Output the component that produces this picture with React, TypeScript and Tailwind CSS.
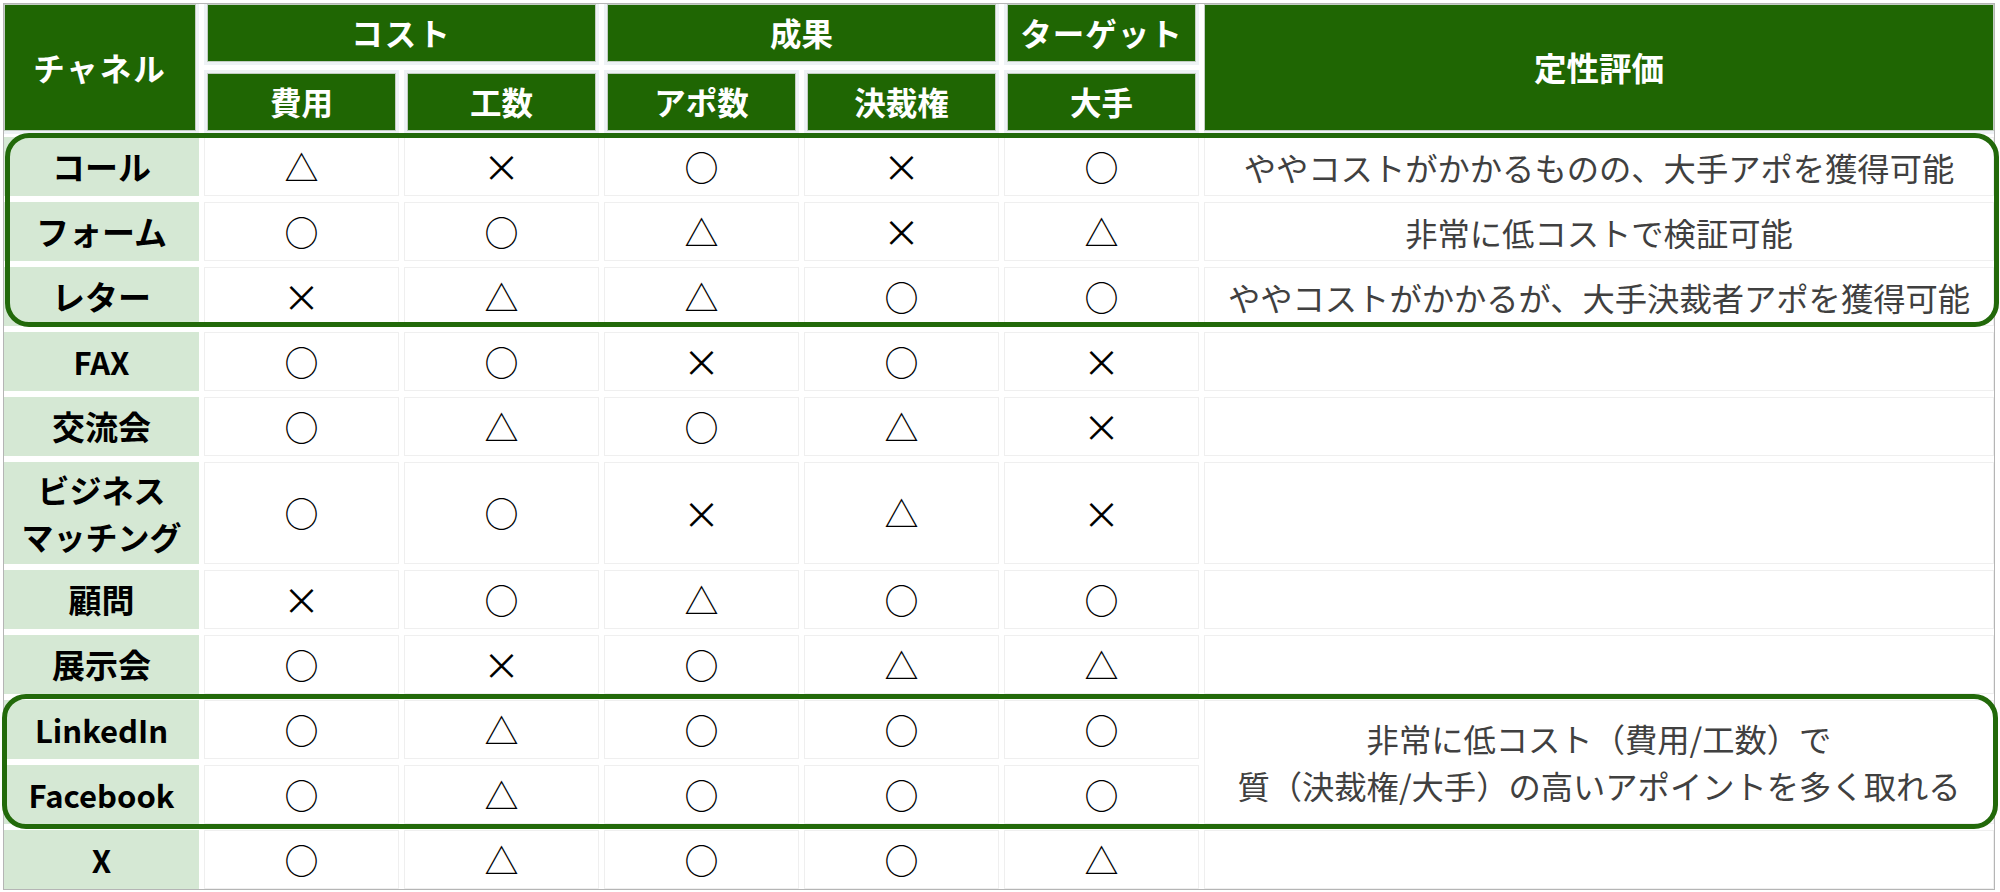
import React from "react";

type Row = { label: React.ReactNode; latin?: boolean; marks: string[]; note?: React.ReactNode; noteSpan?: boolean; skipNote?: boolean; two?: boolean };

const rows: Row[] = [
  { label: "コール", marks: ["△", "×", "○", "×", "○"], note: "ややコストがかかるものの、大手アポを獲得可能" },
  { label: "フォーム", marks: ["○", "○", "△", "×", "△"], note: "非常に低コストで検証可能" },
  { label: "レター", marks: ["×", "△", "△", "○", "○"], note: "ややコストがかかるが、大手決裁者アポを獲得可能" },
  { label: "FAX", latin: true, marks: ["○", "○", "×", "○", "×"] },
  { label: "交流会", marks: ["○", "△", "○", "△", "×"] },
  {
    label: (
      <>
        ビジネス
        <br />
        マッチング
      </>
    ),
    two: true,
    marks: ["○", "○", "×", "△", "×"],
  },
  { label: "顧問", marks: ["×", "○", "△", "○", "○"] },
  { label: "展示会", marks: ["○", "×", "○", "△", "△"] },
  {
    label: "LinkedIn",
    latin: true,
    marks: ["○", "△", "○", "○", "○"],
    note: (
      <>
        非常に低コスト（費用/工数）で
        <br />
        質（決裁権/大手）の高いアポイントを多く取れる
      </>
    ),
    noteSpan: true,
  },
  { label: "Facebook", latin: true, marks: ["○", "△", "○", "○", "○"], skipNote: true },
  { label: "X", latin: true, marks: ["○", "△", "○", "○", "△"] },
];

const head =
  "flex items-center justify-center bg-[#1f6603] text-white font-bold text-[31.5px] leading-none border-[#eef2f5] shadow-[inset_0_0_0_1px_#c3cec3]";

export default function App() {
  return (
    <div className="relative w-[2000px] h-[892px] overflow-hidden bg-white pt-[3px] pl-[3px] font-['Noto_Sans_CJK_JP',sans-serif]">
      <div className="w-[1992px] border border-[#b5b5b5] bg-white">
        {/* header */}
        <div className="grid grid-cols-[195px_195px_195px_195px_195px_195px_790px] grid-rows-[61px_64px] gap-x-[5px] gap-y-[5px]">
          <div className={`${head} row-span-2 border-r-[3px] border-b-[3px] tracking-[2px]`}>チャネル</div>
          <div className={`${head} col-span-2 border-x-[3px] border-b-[3px] tracking-[2px]`}>コスト</div>
          <div className={`${head} col-span-2 border-x-[3px] border-b-[3px]`}>成果</div>
          <div className={`${head} border-x-[3px] border-b-[3px] tracking-[1px]`}>ターゲット</div>
          <div className={`${head} row-span-2 border-b-[3px] text-[32.5px]`}>定性評価</div>
          <div className={`${head} border-[3px]`}>費用</div>
          <div className={`${head} border-[3px]`}>工数</div>
          <div className={`${head} border-[3px]`}>アポ数</div>
          <div className={`${head} border-[3px]`}>決裁権</div>
          <div className={`${head} border-[3px]`}>大手</div>
        </div>
        {/* body */}
        <div className="mt-[3px] grid grid-cols-[195px_195px_195px_195px_195px_195px_790px] grid-rows-[59px_59px_59px_59px_59px_102px_59px_59px_59px_59px_59px] gap-x-[5px] gap-y-[6px]">
          {rows.map((r, i) => (
            <React.Fragment key={i}>
              <div
                className={`flex items-center justify-center bg-[#d5e8d4] text-center font-bold text-black ${
                  r.latin ? "text-[31px] leading-[43px]" : r.two ? "text-[32px] leading-[47px]" : "text-[33px] leading-[43px]"
                }`}
              >
                {r.label}
              </div>
              {r.marks.map((m, j) => (
                <div
                  key={j}
                  className="flex items-center justify-center border border-[#efefef] bg-white leading-none text-black"
                >
                  <span className={m === "×" ? "text-[37px]" : "text-[34px]"}>{m}</span>
                </div>
              ))}
              {!r.skipNote && (
                <div
                  className={`flex items-center justify-center border border-[#efefef] bg-white text-center text-[32.3px] text-[#404040] ${
                    r.noteSpan ? "row-span-2 leading-[47px]" : "leading-[42px]"
                  }`}
                >
                  {r.note}
                </div>
              )}
            </React.Fragment>
          ))}
        </div>
      </div>
      {/* highlight boxes */}
      <div className="absolute left-[5px] top-[133px] h-[194px] w-[1994px] rounded-[24px] border-[5px] border-[#22690a]" />
      <div className="absolute left-[2px] top-[694px] h-[135px] w-[1996px] rounded-[24px] border-[5px] border-[#22690a]" />
    </div>
  );
}
